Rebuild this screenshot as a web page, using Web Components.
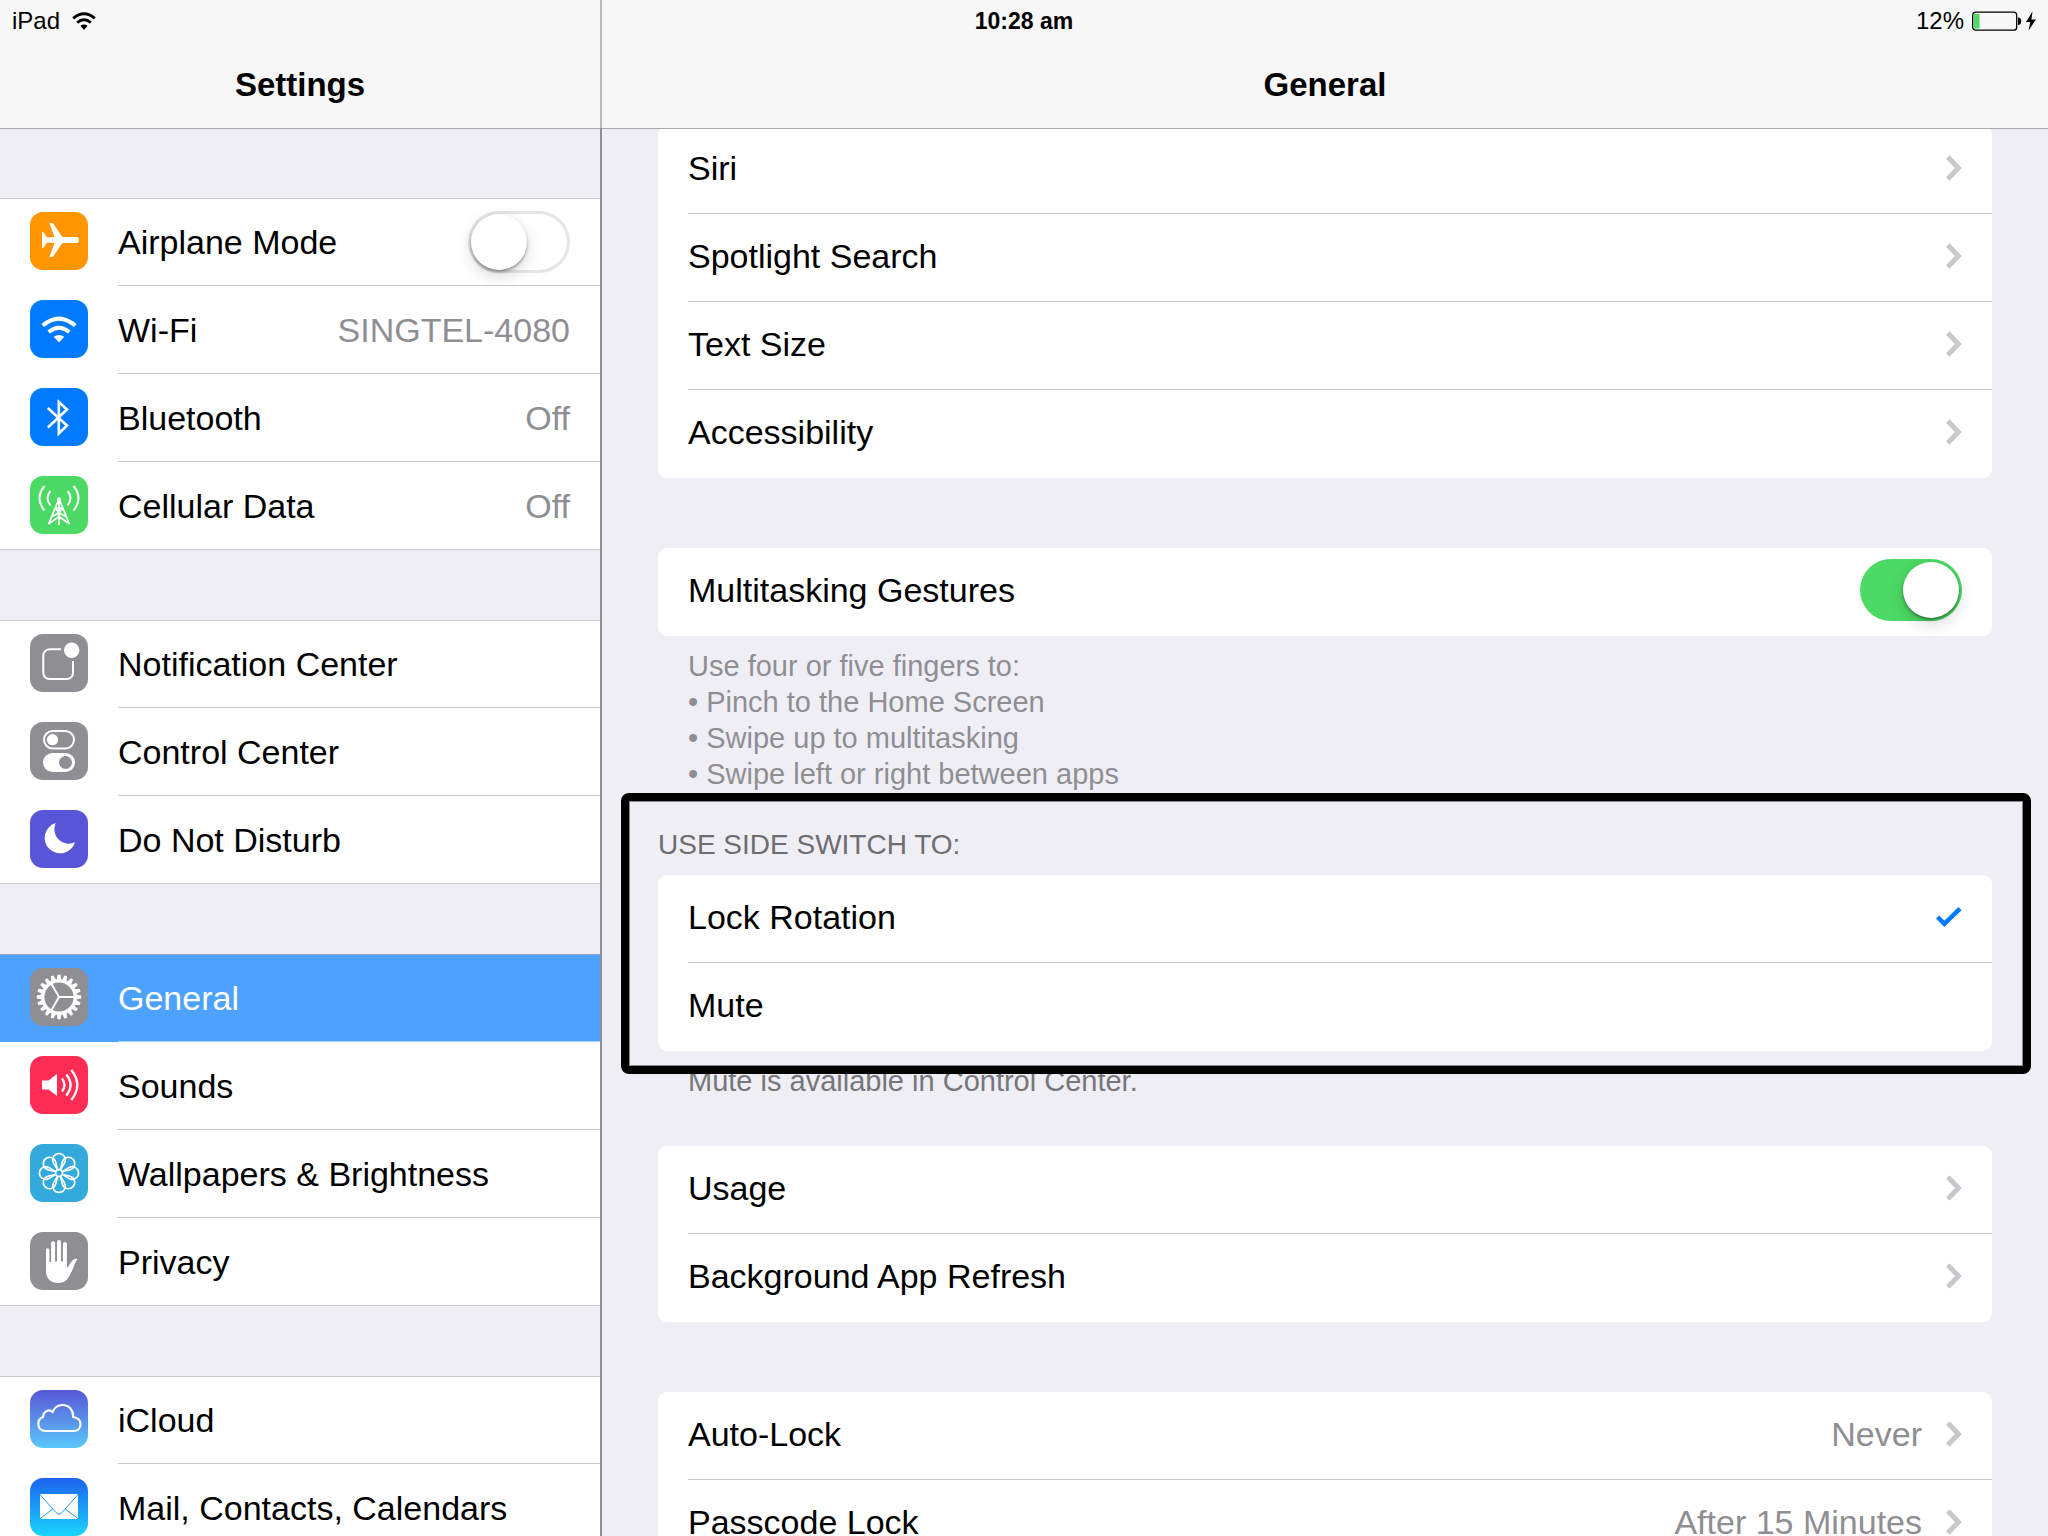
<!DOCTYPE html>
<html lang="en">
<head>
<meta charset="utf-8">
<meta name="viewport" content="width=device-width, initial-scale=1">
<title>Settings</title>
<style>
:root {
    --ground: #f0eef5;
    --line: #c8c7cc;
    --muted: #8e8e93;
    --tint: #007aff;
}
body {
    margin: 0;
    font: 34px/40px "Liberation Sans", Arial, sans-serif;
    color: #000;
    background: var(--ground);
}
</style>
</head>
<body>

<settings-app>
    <status-bar slot="status"></status-bar>
    <nav-title slot="side-title">Settings</nav-title>
    <nav-title slot="main-title">General</nav-title>

    <settings-group slot="side" plain>
        <settings-row icon="airplane" type="switch">Airplane Mode</settings-row>
        <settings-row icon="wifi">Wi-Fi<span slot="value">SINGTEL-4080</span></settings-row>
        <settings-row icon="bluetooth">Bluetooth<span slot="value">Off</span></settings-row>
        <settings-row icon="cellular">Cellular Data<span slot="value">Off</span></settings-row>
    </settings-group>
    <settings-group slot="side" plain>
        <settings-row icon="notification">Notification Center</settings-row>
        <settings-row icon="control">Control Center</settings-row>
        <settings-row icon="moon">Do Not Disturb</settings-row>
    </settings-group>
    <settings-group slot="side" plain>
        <settings-row icon="gear" selected>General</settings-row>
        <settings-row icon="sounds">Sounds</settings-row>
        <settings-row icon="flower">Wallpapers &amp; Brightness</settings-row>
        <settings-row icon="hand">Privacy</settings-row>
    </settings-group>
    <settings-group slot="side" plain>
        <settings-row icon="cloud">iCloud</settings-row>
        <settings-row icon="mail">Mail, Contacts, Calendars</settings-row>
    </settings-group>

    <settings-group>
        <settings-row chevron>Siri</settings-row>
        <settings-row chevron>Spotlight Search</settings-row>
        <settings-row chevron>Text Size</settings-row>
        <settings-row chevron>Accessibility</settings-row>
    </settings-group>
    <settings-group note tight>
        <settings-row type="switch" checked>Multitasking Gestures</settings-row>
        <div slot="note">Use four or five fingers to:<br>• Pinch to the Home Screen<br>• Swipe up to multitasking<br>• Swipe left or right between apps</div>
    </settings-group>
    <settings-group note marked>
        <span slot="heading">USE SIDE SWITCH TO:</span>
        <settings-row type="choice" checked>Lock Rotation</settings-row>
        <settings-row type="choice">Mute</settings-row>
        <div slot="note">Mute is available in Control Center.</div>
    </settings-group>
    <settings-group>
        <settings-row chevron>Usage</settings-row>
        <settings-row chevron>Background App Refresh</settings-row>
    </settings-group>
    <settings-group>
        <settings-row chevron>Auto-Lock<span slot="value">Never</span></settings-row>
        <settings-row chevron>Passcode Lock<span slot="value">After 15 Minutes</span></settings-row>
    </settings-group>
</settings-app>

<script>
'use strict';

//#region Icons

const around = (count, shape) =>
    Array.from(
        { length: count },
        (_, i) => `<g transform="rotate(${(360 / count) * i} 29 29)">${shape}</g>`
    ).join('');

// Each glyph is white on a 58 x 58 tile
const ICONS = {
    airplane: {
        fill: '#ff9500',
        glyph: '<path d="M49 28a3 3 0 0 1-3 3H32.5L22.7 45h-3.4l5.2-14-7.5-.4L13.2 36H12V20h1.2l3.8 5.4 7.5-.4-5.2-14h3.4l9.8 14H46a3 3 0 0 1 3 3z"/>',
    },
    wifi: {
        fill: '#007aff',
        glyph: '<path class="s" stroke-width="4" d="M12.700 25.600Q29 11.500 45.300 25.600M18.700 32Q29 23.500 39.300 32"/><path d="M23.800 36.800Q29 33.200 34.200 36.800L29 42.500z"/>',
    },
    bluetooth: {
        fill: '#007aff',
        glyph: '<path class="s" stroke-width="2.600" stroke-miterlimit="8" d="M17.800 20 37 37.500l-8.200 8V14l8.200 7.500L17.800 39.500"/>',
    },
    cellular: {
        fill: '#4cd964',
        glyph: '<circle cx="29" cy="23.500" r="2.200"/><path class="s" stroke-width="1.700" d="M28.500 24 18.500 48.300M29.500 24 39.500 48.300M29 24v25M25.500 32h7M22 40.500l7-3.500 7 3.500M25.500 32l3.500 5 3.500-5M18.500 48 29 40.500 39.500 48"/><path class="s" stroke-width="2" d="M20.500 15q-6 7 0 14.500M37.500 15q6 7 0 14.500M14.500 10q-10 12 0 24.500M43.500 10q10 12 0 24.500"/>',
    },
    notification: {
        fill: '#8e8e93',
        glyph: '<path class="s" stroke-width="2" d="M31 15.300H19.500a6.200 6.200 0 0 0-6.200 6.200v17.300a6.200 6.200 0 0 0 6.200 6.200h17.300a6.200 6.200 0 0 0 6.200-6.200V27"/><circle cx="41.700" cy="16.300" r="7.700"/>',
    },
    control: {
        fill: '#8e8e93',
        glyph: '<rect class="s" stroke-width="2" x="14" y="9" width="30" height="17.500" rx="8.750"/><circle cx="22.500" cy="17.700" r="5.600"/><path fill-rule="evenodd" d="M22.500 31h13a9.500 9.500 0 0 1 0 19h-13a9.500 9.500 0 0 1 0-19zm13 3a6.500 6.500 0 1 0 0 13 6.500 6.500 0 0 0 0-13z"/>',
    },
    moon: {
        fill: '#5856d6',
        glyph: '<path d="M25.700 13A15.500 15.500 0 1 0 45 32.300 14.500 14.500 0 0 1 25.700 13z"/>',
    },
    gear: {
        fill: '#8e8e93',
        glyph:
            '<circle class="s" stroke-width="3.200" cx="29" cy="29" r="16.200"/>' +
            around(20, '<path d="M26.600 12.500 27.600 6.800h2.800l1 5.700z"/>') +
            around(3, '<path class="s" stroke-width="2" d="M29 29h15.500"/>'),
    },
    sounds: {
        fill: '#ff2d55',
        glyph: '<path d="M12 24.500h6.500L27 18v22l-8.500-6.500H12z"/><path class="s" stroke-width="2.300" d="M32 22.500q5 6.500 0 13M36.300 18.500q8.500 10.500 0 21M41.300 14q12 15 0 30"/>',
    },
    flower: {
        fill: '#34aadc',
        glyph:
            around(8, '<path class="s" stroke-width="1.600" d="M27.600 25.800 23.500 18.800A6.300 6.300 0 1 1 34.500 18.800L30.400 25.800"/>') +
            '<circle class="s" stroke-width="1.600" cx="29" cy="29" r="3.400"/>',
    },
    hand: {
        fill: '#8e8e93',
        glyph: '<path d="M16 18a1.700 1.700 0 0 1 3.400 0V30h1.700V11.300a2 2 0 0 1 4 0V29.500h1.900V10a2 2 0 0 1 4 0V29.500h1.900V12a2 2 0 0 1 4 0V35.500C38.500 36 41 29 43.500 27.500c1.500-1 3-.8 3.800-.300-2.300 2.800-3.300 7.500-5.600 12.300C38 47.500 35 51 28.500 51 20.500 51 16 46.500 16 39z"/>',
    },
    cloud: {
        fill: 'linear-gradient(#5856d6, #5ac8fa)',
        glyph: '<path class="s" stroke-width="2.200" d="M15.500 41C11 41 8.300 38 8.300 34 8.300 30.500 10 28 13 27 13.300 21.500 18.500 18.500 22.500 22 24.500 17.500 28 15 32.500 15 39 15 43.300 20 43.300 27 47.500 27.500 50.500 30.500 50.500 34.200 50.500 38.500 47.500 41 44 41z"/>',
    },
    mail: {
        fill: 'linear-gradient(#1d62f0, #19d5fd)',
        glyph: '<rect x="10" y="16" width="38" height="25" rx="1"/><path fill="none" stroke="#1e96f8" d="M10 16.500 26 34.500q3 3.500 6 0L48 16.500M10 40.500 22.800 31M48 40.500 35.200 31"/>',
    },
};

//#endregion

function define(name, html, setup) {
    const template = document.createElement('template');
    template.innerHTML = html;

    customElements.define(
        name,
        class extends HTMLElement {
            constructor() {
                super();
                this.attachShadow({ mode: 'open' }).append(
                    template.content.cloneNode(true)
                );
            }
            connectedCallback() {
                setup?.(this, this.shadowRoot);
            }
        }
    );
}

define(
    'app-icon',
    `<style>
    :host {
        flex: none;
        width: 58px;
        height: 58px;
        border-radius: 13px;
    }
    svg { display: block; width: 58px; height: 58px; fill: #fff; }
    .s { fill: none; stroke: #fff; }
    </style>
    <svg viewBox="0 0 58 58" aria-hidden="true"></svg>`,
    (host, root) => {
        const { fill, glyph } = ICONS[host.getAttribute('name')];
        host.style.background = fill;
        root.querySelector('svg').innerHTML = glyph;
    }
);

define(
    'ui-switch',
    `<style>
    :host { display: block; flex: none; height: 62px; }
    input {
        appearance: none;
        box-sizing: border-box;
        display: flex;
        width: 102px;
        height: 62px;
        margin: 0;
        padding: 3px;
        border-radius: 31px;
        background: #fff;
        box-shadow: inset 0 0 0 3px #e5e5e5;
    }
    input::before {
        content: "";
        width: 56px;
        height: 56px;
        border-radius: 50%;
        background: #fff;
        box-shadow: 0 2px 3px rgba(0, 0, 0, .35), 0 6px 16px rgba(0, 0, 0, .16);
    }
    input:checked {
        justify-content: flex-end;
        background: #4cd964;
        box-shadow: none;
    }
    </style>
    <input type="checkbox" role="switch">`,
    (host, root) => {
        const input = root.querySelector('input');
        input.checked = host.hasAttribute('checked');
        input.setAttribute('aria-label', host.getAttribute('label'));
    }
);

define(
    'settings-row',
    `<style>
    :host { display: block; }
    :host([selected]) {
        --line: #a6d0ff;
        color: #fff;
        background: #4da1ff;
        box-shadow: inset 0 1px #8fa6c6;
    }
    .row {
        display: flex;
        gap: 30px;
        min-height: 88px;
        padding-left: 30px;
        color: inherit;
        text-decoration: none;
    }
    app-icon { margin-top: 14px; }
    .body {
        flex: 1;
        display: flex;
        align-items: center;
        gap: 24px;
        padding-right: 30px;
        border-bottom: 1px solid var(--line);
    }
    :host(:not([icon])) .body { padding-bottom: 3px; }
    .text { flex: 1; }
    .value { color: var(--muted); }
    svg { display: none; flex: none; fill: none; }
    :host([chevron]) .chevron { display: block; stroke: #c7c7cc; }
    input { position: absolute; opacity: 0; pointer-events: none; }
    input:checked ~ .body .tick { display: block; stroke: var(--tint); }
    </style>`,
    (host, root) => {
        if (root.querySelector('.row')) {
            return;
        }
        const type = host.getAttribute('type');
        const icon = host.getAttribute('icon');
        const row = document.createElement(
            type === 'choice' ? 'label' : type === 'switch' ? 'div' : 'a'
        );
        row.className = 'row';
        if (row.matches('a')) {
            row.href = '#';
        }
        row.innerHTML = `
            ${type === 'choice' ? '<input type="radio">' : ''}
            ${icon ? `<app-icon name="${icon}"></app-icon>` : ''}
            <span class="body">
                <span class="text"><slot></slot></span>
                <span class="value"><slot name="value"></slot></span>
                <svg class="chevron" width="16" height="26" stroke-width="5" aria-hidden="true"><path d="M1.800 2 12.400 13 1.800 24"/></svg>
                <svg class="tick" width="26" height="20" stroke-width="4.500" aria-hidden="true"><path d="M1.600 10 8.300 16.800 24 1.600"/></svg>
            </span>`;
        if (type === 'switch') {
            const toggle = document.createElement('ui-switch');
            toggle.setAttribute('label', host.textContent);
            toggle.toggleAttribute('checked', host.hasAttribute('checked'));
            row.querySelector('.value').replaceWith(toggle);
        }
        root.append(row);

        // radios in separate shadow roots don't share a group
        const radio = root.querySelector('input');
        if (radio) {
            radio.checked = host.hasAttribute('checked');
            radio.addEventListener('change', () => {
                for (const sibling of host.parentNode.querySelectorAll('[type=choice]')) {
                    sibling.shadowRoot.querySelector('input').checked = sibling === host;
                }
            });
        }
    }
);

define(
    'settings-group',
    `<style>
    :host { display: block; margin-bottom: 70px; }
    :host([note]) { margin-bottom: 47px; }
    :host([tight]) { margin-bottom: 35px; }
    .block { position: relative; }
    .rows { overflow: hidden; border-radius: 9px; background: #fff; }
    .heading, .note { line-height: 36px; }
    .heading { padding-bottom: 12px; color: #6d6d72; font-size: 28px; }
    .note { padding: 12px 30px 0; color: var(--muted); font-size: 29px; }
    :host([marked]) .note { color: #76767b; }
    :host(:not([marked])) .heading, :host(:not([note])) .note { display: none; }
    slot:not([name])::slotted(:last-child) { --line: transparent; }
    .rows ::slotted(:nth-last-child(2)) { --line: var(--before-note, #c8c7cc); }

    :host([plain]) .rows {
        border-radius: 0;
        background:
            linear-gradient(var(--line), var(--line)) top / 100% 1px no-repeat,
            linear-gradient(var(--line), var(--line)) bottom / 100% 1px no-repeat,
            #fff;
    }
    :host([note]) { --before-note: transparent; }

    /* highlight drawn round the heading and its rows */
    :host([marked]) .block::after {
        content: "";
        position: absolute;
        z-index: 1;
        inset: -34px -39px -23px -37px;
        border: 8px solid #000;
        border-radius: 8px;
        box-shadow: inset 0 0 0 1px #8a898d;
        pointer-events: none;
    }
    </style>
    <div class="block">
        <div class="heading"><slot name="heading"></slot></div>
        <div class="rows"><slot></slot></div>
    </div>
    <div class="note"><slot name="note"></slot></div>`
);

define(
    'nav-title',
    `<style>
    :host { display: block; }
    h1 {
        box-sizing: border-box;
        height: 129px;
        margin: 0;
        padding-top: 65px;
        border-bottom: 1px solid #a9a8ad;
        background: #f7f7f7;
        font-size: 33px;
        line-height: 40px;
        text-align: center;
    }
    </style>
    <h1><slot></slot></h1>`
);

define(
    'status-bar',
    `<style>
    :host {
        display: grid;
        grid-template-columns: 1fr auto 1fr;
        align-items: center;
        padding: 0 12px;
        font-size: 24px;
        line-height: 42px;
    }
    div { display: flex; align-items: center; gap: 12px; }
    b { font-size: 23px; }
    .power { justify-content: flex-end; gap: 8px; }
    </style>
    <div>
        <span>iPad</span>
        <svg width="24" height="18" aria-hidden="true">
            <path fill="none" stroke="#000" stroke-width="3" d="M1.200 6.300Q12-2.800 22.800 6.300M5.200 10.600Q12 4.800 18.800 10.600"/>
            <path d="M8.400 13.800Q12 11 15.600 13.800L12 18z"/>
        </svg>
    </div>
    <b>10:28 am</b>
    <div class="power">
        <span>12%</span>
        <svg width="64" height="20" aria-hidden="true">
            <rect x=".7" y="1.200" width="44" height="18" rx="3" fill="none" stroke="#000" stroke-width="1.300"/>
            <rect x="2" y="3" width="5.500" height="14.500" fill="#4cd964"/>
            <path d="M46 6.500q3.200 0 3.200 3.700T46 14z"/>
            <path d="M60.500.5 54 11h4.300L56.500 19.500 64 8.500h-4.600z"/>
        </svg>
    </div>`
);

define(
    'settings-app',
    `<style>
    :host {
        display: grid;
        grid-template-columns: 600px 2px minmax(0, 1fr);
        grid-template-rows: 42px 87px minmax(0, 1fr);
        height: 100vh;
    }
    .side-title { grid-area: 1 / 1 / 3 / 2; }
    .main-title { grid-area: 1 / 3 / 3 / 4; }
    .divider {
        grid-area: 1 / 2 / 4 / 3;
        background: linear-gradient(#b9b9bc 128px, #8f8e94 128px);
    }
    .status { grid-area: 1 / 1 / 2 / 4; z-index: 1; }
    aside, main { overflow: auto; scrollbar-width: none; }
    aside { grid-area: 3 / 1; padding-top: 69px; }
    main { grid-area: 3 / 3; padding: 70px 56px 0; }
    </style>
    <div class="side-title"><slot name="side-title"></slot></div>
    <div class="main-title"><slot name="main-title"></slot></div>
    <div class="divider"></div>
    <div class="status"><slot name="status"></slot></div>
    <aside><slot name="side"></slot></aside>
    <main><slot></slot></main>`
);

// General opens part of the way down its list
document
    .querySelector('settings-app')
    .shadowRoot.querySelector('main').scrollTop = 73;
</script>
</body>
</html>
